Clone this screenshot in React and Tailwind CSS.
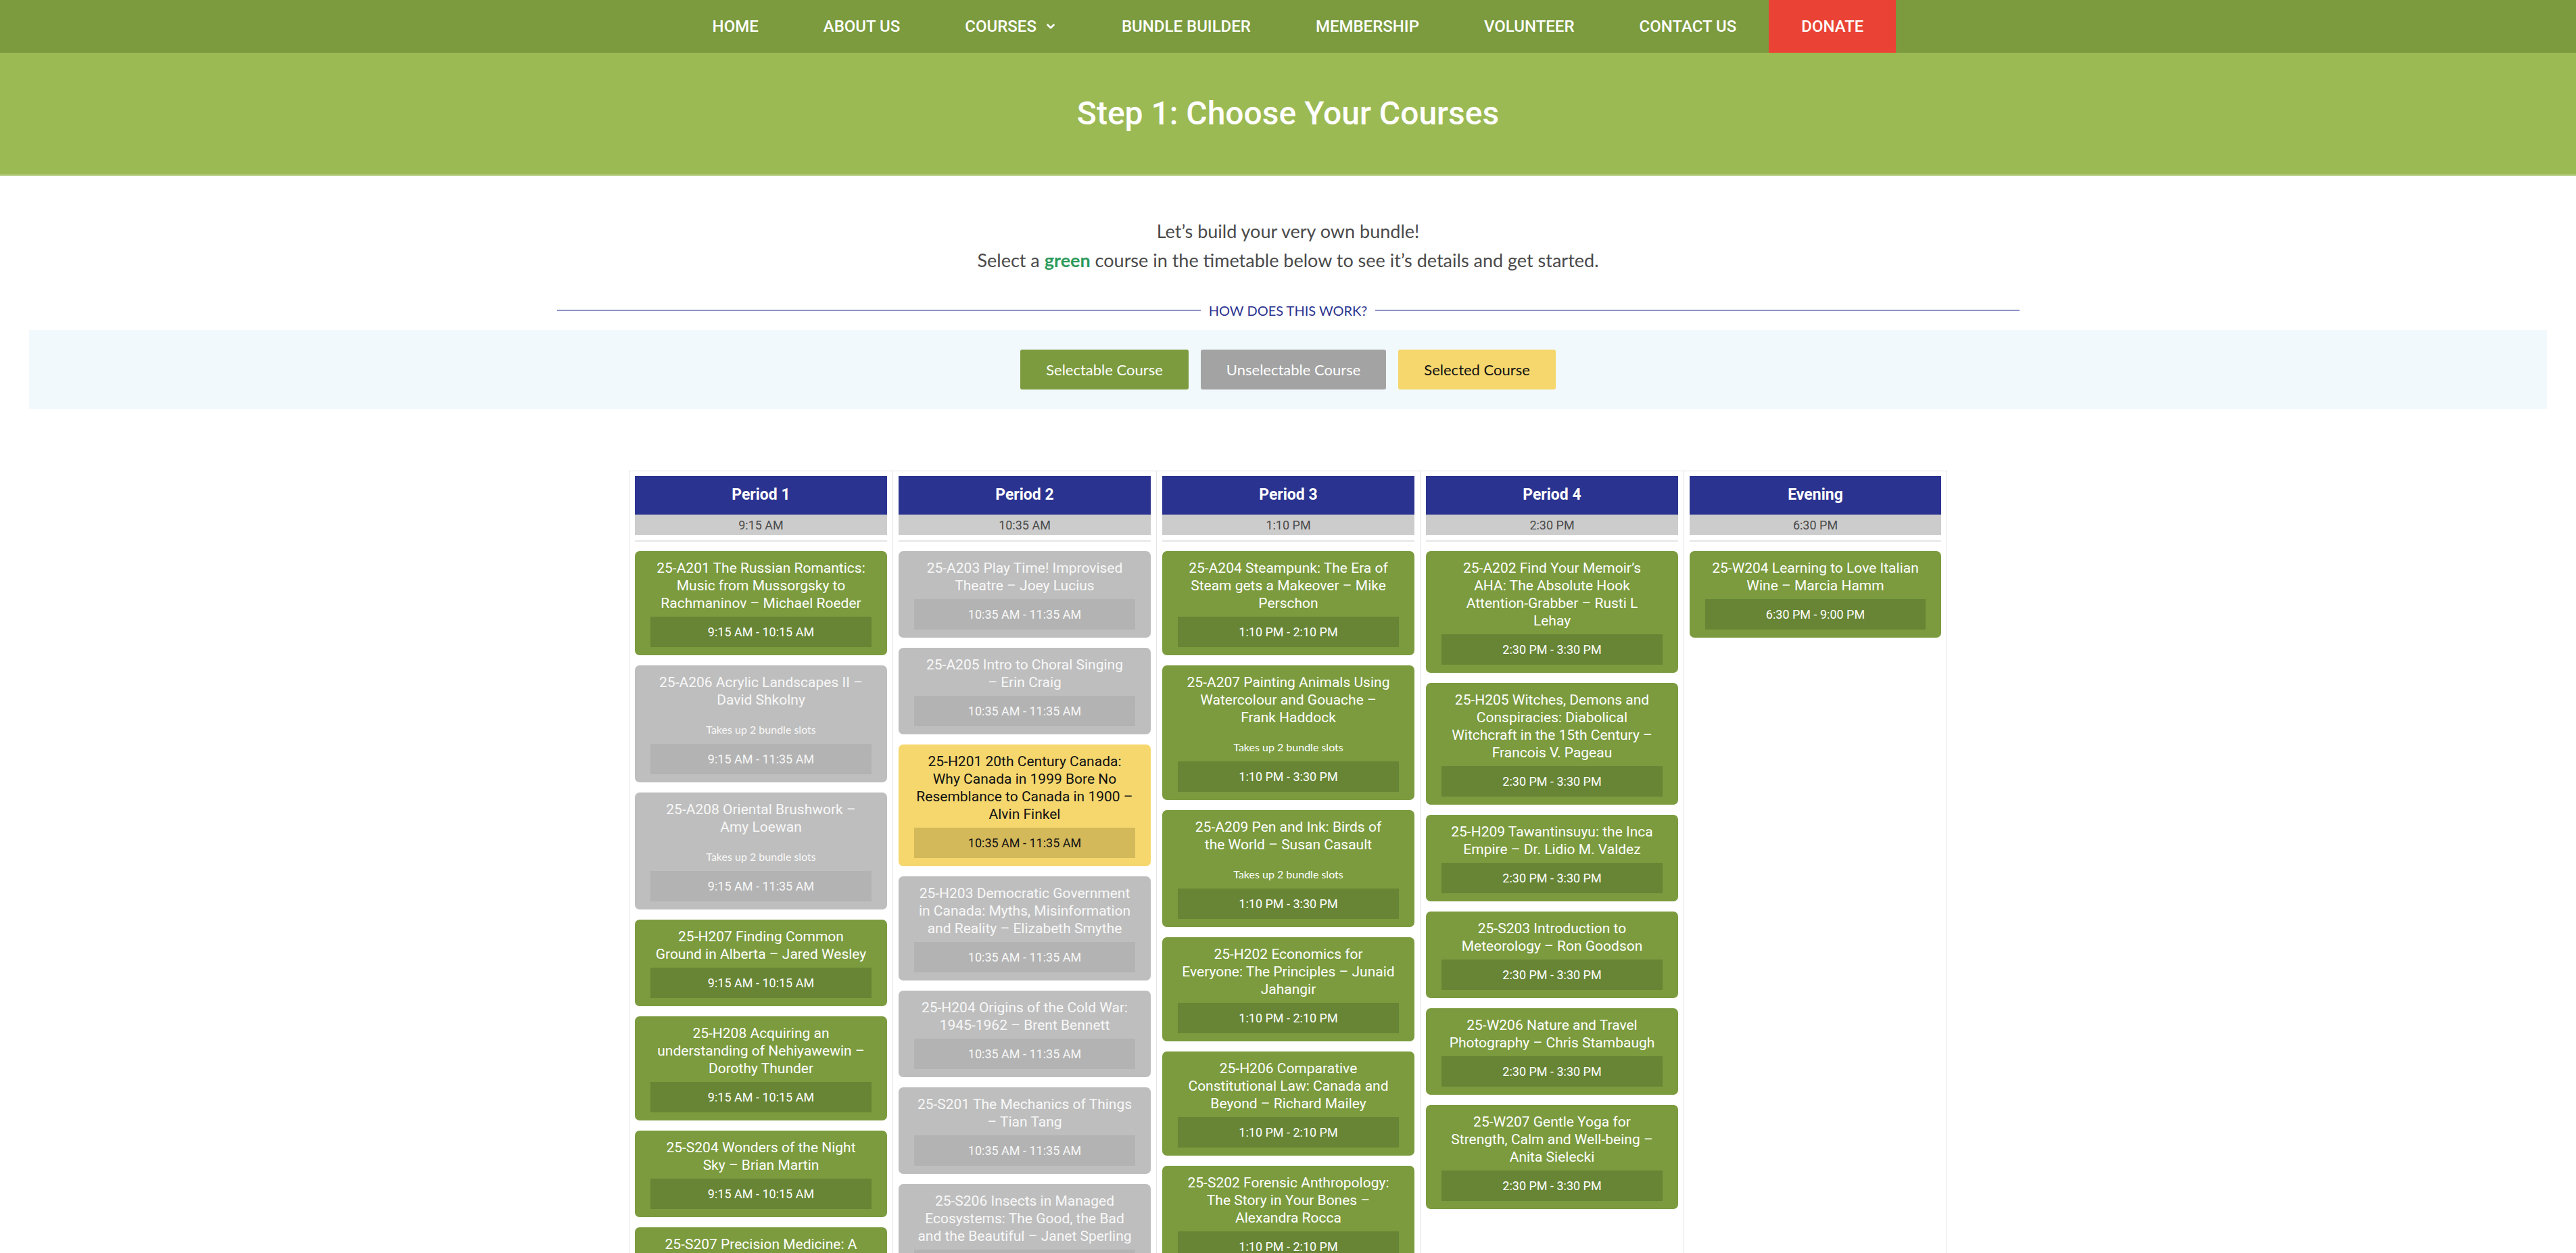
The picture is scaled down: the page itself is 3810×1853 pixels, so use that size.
import React from 'react';
import { ChevronDown } from 'lucide-react';

const navItems = ['Home', 'About Us', 'Courses', 'Bundle Builder', 'Membership', 'Volunteer', 'Contact Us'];

// colour sets for the three course states
const tones = {
  green: { card: 'bg-[#7b9b3e] text-white', strip: 'bg-[#678535] text-white' },
  gray: { card: 'bg-[#bebebe] text-[#f8f8f8]', strip: 'bg-[#b3b3b3] text-[#f8f8f8]' },
  yellow: { card: 'bg-[#f5d76e] text-[#111]', strip: 'bg-[#d4b95b] text-[#111]' },
};

const periods = [
  {
    name: 'Period 1',
    start: '9:15 AM',
    courses: [
      { kind: 'green', lines: ['25-A201 The Russian Romantics:', 'Music from Mussorgsky to', 'Rachmaninov – Michael Roeder'], time: '9:15 AM - 10:15 AM' },
      { kind: 'gray', lines: ['25-A206 Acrylic Landscapes II –', 'David Shkolny'], slots: true, time: '9:15 AM - 11:35 AM' },
      { kind: 'gray', lines: ['25-A208 Oriental Brushwork –', 'Amy Loewan'], slots: true, time: '9:15 AM - 11:35 AM' },
      { kind: 'green', lines: ['25-H207 Finding Common', 'Ground in Alberta – Jared Wesley'], time: '9:15 AM - 10:15 AM' },
      { kind: 'green', lines: ['25-H208 Acquiring an', 'understanding of Nehiyawewin –', 'Dorothy Thunder'], time: '9:15 AM - 10:15 AM' },
      { kind: 'green', lines: ['25-S204 Wonders of the Night', 'Sky – Brian Martin'], time: '9:15 AM - 10:15 AM' },
      { kind: 'green', lines: ['25-S207 Precision Medicine: A', 'New Era in Health Care'], time: '9:15 AM - 10:15 AM' },
    ],
  },
  {
    name: 'Period 2',
    start: '10:35 AM',
    courses: [
      { kind: 'gray', lines: ['25-A203 Play Time! Improvised', 'Theatre – Joey Lucius'], time: '10:35 AM - 11:35 AM' },
      { kind: 'gray', lines: ['25-A205 Intro to Choral Singing', '– Erin Craig'], time: '10:35 AM - 11:35 AM' },
      { kind: 'yellow', lines: ['25-H201 20th Century Canada:', 'Why Canada in 1999 Bore No', 'Resemblance to Canada in 1900 –', 'Alvin Finkel'], time: '10:35 AM - 11:35 AM' },
      { kind: 'gray', lines: ['25-H203 Democratic Government', 'in Canada: Myths, Misinformation', 'and Reality – Elizabeth Smythe'], time: '10:35 AM - 11:35 AM' },
      { kind: 'gray', lines: ['25-H204 Origins of the Cold War:', '1945-1962 – Brent Bennett'], time: '10:35 AM - 11:35 AM' },
      { kind: 'gray', lines: ['25-S201 The Mechanics of Things', '– Tian Tang'], time: '10:35 AM - 11:35 AM' },
      { kind: 'gray', lines: ['25-S206 Insects in Managed', 'Ecosystems: The Good, the Bad', 'and the Beautiful – Janet Sperling'], time: '10:35 AM - 11:35 AM' },
    ],
  },
  {
    name: 'Period 3',
    start: '1:10 PM',
    courses: [
      { kind: 'green', lines: ['25-A204 Steampunk: The Era of', 'Steam gets a Makeover – Mike', 'Perschon'], time: '1:10 PM - 2:10 PM' },
      { kind: 'green', lines: ['25-A207 Painting Animals Using', 'Watercolour and Gouache –', 'Frank Haddock'], slots: true, time: '1:10 PM - 3:30 PM' },
      { kind: 'green', lines: ['25-A209 Pen and Ink: Birds of', 'the World – Susan Casault'], slots: true, time: '1:10 PM - 3:30 PM' },
      { kind: 'green', lines: ['25-H202 Economics for', 'Everyone: The Principles – Junaid', 'Jahangir'], time: '1:10 PM - 2:10 PM' },
      { kind: 'green', lines: ['25-H206 Comparative', 'Constitutional Law: Canada and', 'Beyond – Richard Mailey'], time: '1:10 PM - 2:10 PM' },
      { kind: 'green', lines: ['25-S202 Forensic Anthropology:', 'The Story in Your Bones –', 'Alexandra Rocca'], time: '1:10 PM - 2:10 PM' },
    ],
  },
  {
    name: 'Period 4',
    start: '2:30 PM',
    courses: [
      { kind: 'green', lines: ['25-A202 Find Your Memoir’s', 'AHA: The Absolute Hook', 'Attention-Grabber – Rusti L', 'Lehay'], time: '2:30 PM - 3:30 PM' },
      { kind: 'green', lines: ['25-H205 Witches, Demons and', 'Conspiracies: Diabolical', 'Witchcraft in the 15th Century –', 'Francois V. Pageau'], time: '2:30 PM - 3:30 PM' },
      { kind: 'green', lines: ['25-H209 Tawantinsuyu: the Inca', 'Empire – Dr. Lidio M. Valdez'], time: '2:30 PM - 3:30 PM' },
      { kind: 'green', lines: ['25-S203 Introduction to', 'Meteorology – Ron Goodson'], time: '2:30 PM - 3:30 PM' },
      { kind: 'green', lines: ['25-W206 Nature and Travel', 'Photography – Chris Stambaugh'], time: '2:30 PM - 3:30 PM' },
      { kind: 'green', lines: ['25-W207 Gentle Yoga for', 'Strength, Calm and Well-being –', 'Anita Sielecki'], time: '2:30 PM - 3:30 PM' },
    ],
  },
  {
    name: 'Evening',
    start: '6:30 PM',
    courses: [
      { kind: 'green', lines: ['25-W204 Learning to Love Italian', 'Wine – Marcia Hamm'], time: '6:30 PM - 9:00 PM' },
    ],
  },
];

function CourseCard({ course }) {
  const tone = tones[course.kind];
  return (
    <div className={`rounded-[7px] px-[23px] pt-[12px] pb-[12px] text-center ${tone.card}`}>
      <div className="text-[21px] leading-[26px]">
        {course.lines.map((line) => (
          <div key={line} className="whitespace-nowrap">{line}</div>
        ))}
      </div>
      {course.slots && (
        <div className="mt-[21px] font-['Lato',sans-serif] text-[16px] leading-[20px]">Takes up 2 bundle slots</div>
      )}
      <div className={`${course.slots ? 'mt-[11px]' : 'mt-[7px]'} flex h-[45px] items-center justify-center text-[18px] ${tone.strip}`}>
        {course.time}
      </div>
    </div>
  );
}

function PeriodColumn({ period, last }) {
  return (
    <div className={`w-[390px] border-l border-[#e3e3e3] px-[8px] pt-[7px] ${last ? 'border-r' : ''}`}>
      <div className="flex h-[57px] items-center justify-center bg-[#2b3390] text-[23px] font-bold text-white">
        {period.name}
      </div>
      <div className="flex h-[30px] items-center justify-center bg-[#cccccc] text-[18px] text-[#4a4a4a]">
        {period.start}
      </div>
      <div className="mt-[8px] h-[2px] bg-[#e6e6e6]" />
      <div className="mt-[14px] flex flex-col gap-[15px] pb-[40px]">
        {period.courses.map((c) => (
          <CourseCard key={c.lines[0]} course={c} />
        ))}
      </div>
    </div>
  );
}

export default function App() {
  return (
    <div className="min-h-screen w-full bg-white font-['Roboto',sans-serif]">
      {/* top navigation */}
      <nav className="flex h-[78px] justify-center bg-[#7b9b3e]">
        {navItems.map((item) => (
          <a key={item} className="flex items-center px-[48px] text-[24px] font-medium uppercase text-white">
            {item}
            {item === 'Courses' && <ChevronDown size={18} strokeWidth={3.5} className="ml-[12px]" />}
          </a>
        ))}
        <a className="flex items-center bg-[#ea4335] px-[48px] text-[24px] font-medium uppercase text-white">Donate</a>
      </nav>

      {/* page title */}
      <header className="flex h-[182px] items-center justify-center border-b-2 border-[#b7cd84] bg-[#9cba53]">
        <h1 className="text-[48px] font-medium text-white">Step 1: Choose Your Courses</h1>
      </header>

      <div className="pt-[60px] text-center font-['Lato',sans-serif] text-[27px] leading-[43px] text-[#4a4a4a]">
        <p>Let’s build your very own bundle!</p>
        <p>
          Select a <span className="font-bold text-[#2c9a5a]">green</span> course in the timetable below to see it’s details and get started.
        </p>
      </div>

      {/* how does this work divider */}
      <div className="mx-auto mt-[40px] flex h-[26px] w-[2163px] items-center gap-[12px]">
        <div className="h-[2px] flex-1 bg-[#8d92c6]" />
        <span className="font-['Lato',sans-serif] text-[20px] uppercase text-[#2b3390]">How does this work?</span>
        <div className="h-[2px] flex-1 bg-[#8d92c6]" />
      </div>

      {/* legend */}
      <div className="mx-[43px] mt-[16px] flex justify-center gap-[18px] bg-[#f2f9fc] py-[29px] font-['Lato',sans-serif] text-[22px]">
        <div className="flex h-[59px] items-center rounded-[3px] bg-[#7b9b3e] px-[38px] text-white">Selectable Course</div>
        <div className="flex h-[59px] items-center rounded-[3px] bg-[#a3a3a3] px-[38px] text-white">Unselectable Course</div>
        <div className="flex h-[59px] items-center rounded-[3px] bg-[#f5d76e] px-[38px] text-[#111]">Selected Course</div>
      </div>

      {/* timetable */}
      <div className="mt-[91px] flex justify-center">
        <div className="flex border-t border-[#e3e3e3]">
          {periods.map((p, i) => (
            <PeriodColumn key={p.name} period={p} last={i === periods.length - 1} />
          ))}
        </div>
      </div>
    </div>
  );
}
